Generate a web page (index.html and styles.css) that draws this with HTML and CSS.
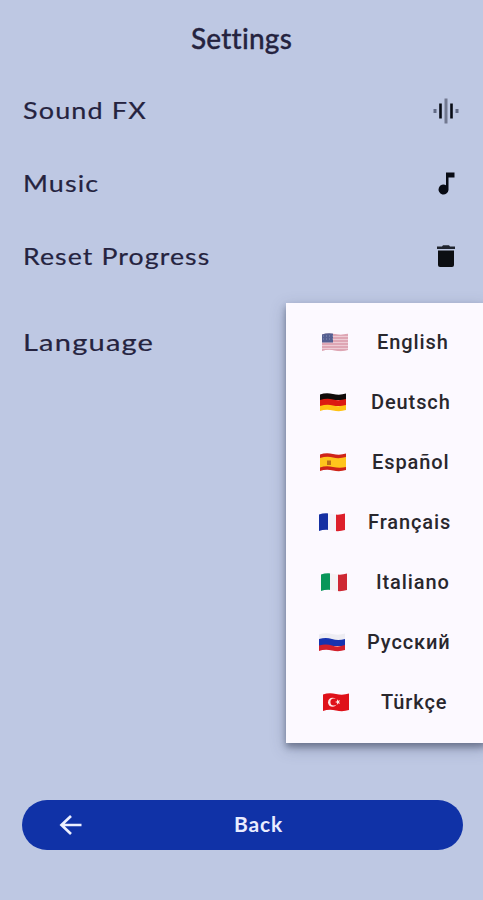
FILE: index.html
```html
<!DOCTYPE html>
<html lang="en">
<head>
<meta charset="utf-8">
<title>Settings</title>
<link rel="stylesheet" href="styles.css">
</head>
<body>
<svg width="0" height="0" class="defs" aria-hidden="true">
  <defs>
    <clipPath id="wave"><path d="M0 1.5Q6 -.5 13 1Q20 2.5 26 .5V17Q20 19 13 17.500Q6 16 0 18Z"/></clipPath>
  </defs>
</svg>
<main class="screen">
  <h1 class="title">Settings</h1>
  <section class="settings">
    <div class="setting"><span class="label sound">Sound FX</span>
      <svg class="icon" viewBox="0 0 28 28"><g stroke-linecap="butt" fill="none"><path d="M14 1.500V26.500" stroke="#727990" stroke-width="3"/><path d="M8.500 6.500V21.500M19.500 6.500V21.500" stroke="#080c15" stroke-width="2.600"/><path d="M3 12V16M25 12V16" stroke="#626b85" stroke-width="3"/></g></svg>
    </div>
    <div class="setting"><span class="label music">Music</span>
      <svg class="icon" viewBox="0 0 28 28"><path d="M14 2.500H22.500V7.500H16.500V20A5 5 0 1 1 14 15.200Z" fill="#080b14"/></svg>
    </div>
    <div class="setting"><span class="label reset">Reset Progress</span>
      <svg class="icon" viewBox="0 0 28 28"><path d="M6 7.500H22V22Q22 24 20 24H8Q6 24 6 22Z" fill="#0c0e12"/><path d="M5 3.500H10L11 2.200H17L18 3.500H23V6H5Z" fill="#20242e"/></svg>
    </div>
    <div class="setting language-row"><span class="label language">Language</span></div>
  </section>
  <button class="back">
    <svg class="arrow" viewBox="0 0 24 22"><path d="M22.500 11H2.500M12 2L2.500 11L12 20" fill="none" stroke="#edf0ff" stroke-width="2.700"/></svg>
    <span class="back-label">Back</span>
  </button>
  <ul class="menu">
    <li class="en"><svg class="flag" viewBox="0 0 26 19"><g clip-path="url(#wave)"><path fill="#edcbd4" d="M0 0H26V19H0Z"/><path stroke="#d99aa9" stroke-width="1.400" d="M0 2H26M0 5H26M0 8H26M0 11H26M0 14H26M0 17H26"/><path fill="#555f91" d="M0 0H11V9.500H0Z"/><path stroke="#8991b5" stroke-dasharray="1 2" d="M1 3H11M1 6H11"/></g></svg><span>English</span></li>
    <li class="de"><svg class="flag" viewBox="0 0 26 19"><g clip-path="url(#wave)"><path fill="#100b09" d="M0 0H26V7H0Z"/><path fill="#dc1b11" d="M0 7Q7 5 13 6.500T26 6V13H0Z"/><path fill="#ffc313" d="M0 13Q7 11 13 12.500T26 12V19H0Z"/></g></svg><span>Deutsch</span></li>
    <li class="es"><svg class="flag" viewBox="0 0 26 19"><g clip-path="url(#wave)"><path fill="#cf2419" d="M0 0H26V19H0Z"/><path fill="#ffc51c" d="M0 5Q7 3 13 4.500T26 4V14Q20 15.500 13 14T0 14.500Z"/><path fill="#b96e19" d="M7 7.500H11V12H7Z"/></g></svg><span>Español</span></li>
    <li class="fr"><svg class="flag" viewBox="0 0 26 19"><g clip-path="url(#wave)"><path fill="#1530a2" d="M0 0H9V19H0Z"/><path fill="#f4f3fa" d="M9 0H17V19H9Z"/><path fill="#dd202b" d="M17 0H26V19H17Z"/></g></svg><span>Français</span></li>
    <li class="it"><svg class="flag" viewBox="0 0 26 19"><g clip-path="url(#wave)"><path fill="#08965a" d="M0 0H9V19H0Z"/><path fill="#f4f3f5" d="M9 0H17V19H9Z"/><path fill="#ce2833" d="M17 0H26V19H17Z"/></g></svg><span>Italiano</span></li>
    <li class="ru"><svg class="flag" viewBox="0 0 26 19"><g clip-path="url(#wave)"><path fill="#eeedf3" d="M0 0H26V8H0Z"/><path fill="#1733b0" d="M0 6Q7 4 13 6T26 6V13H0Z"/><path fill="#d3202b" d="M0 12.500Q7 10.500 13 12.500T26 12V19H0Z"/></g></svg><span>Русский</span></li>
    <li class="tr"><svg class="flag" viewBox="0 0 26 19"><g clip-path="url(#wave)"><path fill="#df1119" d="M0 0H26V19H0Z"/><circle cx="9.500" cy="9.200" r="4.500" fill="#ffe7e5"/><circle cx="10.900" cy="9" r="3.500" fill="#df1119"/><path fill="#ffe7e5" d="M12 9L14 8.200V6.200L15.200 7.800L17.200 7.300L16 9L17.200 10.700L15.200 10.200L14 11.800V9.800Z"/></g></svg><span>Türkçe</span></li>
  </ul>
</main>
</body>
</html>
```
FILE: styles.css
```css
* { box-sizing: border-box; }
body { margin: 0; background: #bec8e3; }
.defs { position: absolute; }
.screen {
  position: relative;
  display: flex;
  flex-direction: column;
  width: 483px;
  height: 900px;
  overflow: hidden;
  background: #bec8e3;
  color: #25233f;
  font-family: Lato, sans-serif;
}
.title {
  margin: 0;
  height: 74px;
  padding-top: 20px;
  text-align: center;
  font-size: 28px;
  line-height: 36px;
  font-weight: 500;
  letter-spacing: .2px;
  font-variant-ligatures: none;
  -webkit-text-stroke: .3px currentColor;
}
.settings { padding: 0 23px; }
.setting {
  display: flex;
  align-items: center;
  justify-content: space-between;
  height: 73px;
}
.language-row { height: 99px; }
.label {
  padding-bottom: 2px;
  font-size: 24px;
  line-height: 32px;
  letter-spacing: 1px;
  white-space: nowrap;
  transform-origin: left center;
  -webkit-text-stroke: .2px currentColor;
}
.sound { transform: scaleX(1.125); }
.music { transform: scaleX(1.12); }
.reset { transform: scaleX(1.11); }
.language { transform: scaleX(1.21); }
.icon { width: 28px; height: 28px; }
.back {
  display: grid;
  grid-template-columns: 24px 1fr;
  align-items: center;
  width: 441px;
  height: 50px;
  margin: auto 0 50px 22px;
  padding: 0 30px 0 37px;
  border: 0;
  border-radius: 25px;
  background: #1032a7;
  color: #e9ecff;
  font: 700 21px/28px Lato, sans-serif;
  letter-spacing: .8px;
}
.back-label { padding: 0 0 2px 1px; }
.arrow { width: 24px; height: 22px; }
.menu {
  position: absolute;
  top: 303px;
  left: 286px;
  width: 200px;
  height: 440px;
  margin: 0;
  padding: 9px 0 11px;
  list-style: none;
  background: #fcf9ff;
  box-shadow: 0 4px 6px rgba(45, 52, 75, .4), 0 5px 14px rgba(55, 65, 95, .35);
  color: #29272d;
  font: 500 20px/28px Roboto, sans-serif;
  letter-spacing: .9px;
}
.menu li { display: flex; align-items: center; height: 60px; }
.flag { flex: none; width: 26px; height: 19px; }
.en { padding-left: 36px; gap: 29px; }
.de { padding-left: 34px; gap: 25px; }
.es { padding-left: 34px; gap: 26px; }
.fr { padding-left: 33px; gap: 23px; }
.it { padding-left: 35px; gap: 29px; }
.ru { padding-left: 33px; gap: 22px; }
.tr { padding-left: 37px; gap: 32px; }
```
